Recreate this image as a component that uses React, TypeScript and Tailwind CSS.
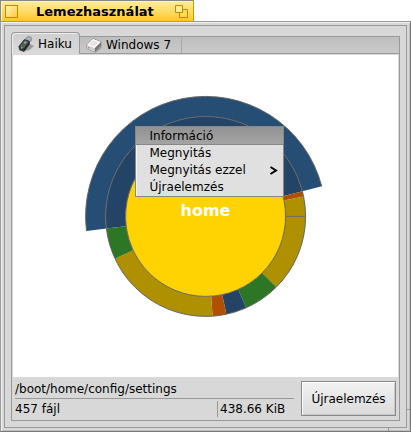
const CENTER = 120;

type Segment = { from: number; to: number; inner: number; outer: number; color: string };

// Angles run clockwise in degrees, starting at three o'clock.
const segments: Segment[] = [
  { from: 173, to: 345.5, inner: 100, outer: 120, color: '#264d73' },
  { from: 173, to: 345.5, inner: 80, outer: 100, color: '#234466' },
  { from: 345.5, to: 348.5, inner: 80, outer: 100, color: '#b05000' },
  { from: 348.5, to: 360, inner: 80, outer: 100, color: '#af9000' },
  { from: 0, to: 45, inner: 80, outer: 100, color: '#af9000' },
  { from: 45, to: 66, inner: 80, outer: 100, color: '#2c7625' },
  { from: 66, to: 78, inner: 80, outer: 100, color: '#234466' },
  { from: 78, to: 86, inner: 80, outer: 100, color: '#b05000' },
  { from: 86, to: 155, inner: 80, outer: 100, color: '#af9000' },
  { from: 155, to: 173, inner: 80, outer: 100, color: '#2c7625' },
];

function point(radius: number, angle: number) {
  const a = (angle * Math.PI) / 180;
  return `${CENTER + radius * Math.cos(a)} ${CENTER + radius * Math.sin(a)}`;
}

function ringPath({ from, to, inner, outer }: Segment) {
  return `M${point(outer, from)}A${outer} ${outer} 0 0 1 ${point(outer, to)}L${point(inner, to)}A${inner} ${inner} 0 0 0 ${point(inner, from)}Z`;
}

function arcPath(radius: number, from: number, to: number) {
  return `M${point(radius, from)}A${radius} ${radius} 0 0 1 ${point(radius, to)}`;
}

function UsageChart() {
  return (
    <svg viewBox="-0.6 -1.4 242 242" className="block size-[242px]" role="img" aria-label="home">
      {segments.map((s, i) => (
        <path key={i} d={ringPath(s)} fill={s.color} />
      ))}
      <circle cx={CENTER} cy={CENTER} r="80" fill="#ffd202" />
      <g fill="none" stroke="#666" strokeWidth="1">
        <circle cx={CENTER} cy={CENTER} r="80" />
        <circle cx={CENTER} cy={CENTER} r="100" />
        <path d={arcPath(120, 173, 345.5)} />
        <path d="M200 120h20" />
      </g>
    </svg>
  );
}

function UsbIcon() {
  return (
    <svg viewBox="0 0 16 16" className="size-4 shrink-0" aria-hidden="true">
      <path d="M5 15.5l6.5-1.5 4.5-4-4-2z" fill="#8c8c8c" opacity=".8" />
      <path d="M7.5 3.2L9.5.5l3.6.7.4 3.3-2.2 1.8z" fill="#a5b5ba" stroke="#69797d" strokeWidth=".7" />
      <path d="M.8 10.5l5.5-7 5.2 1.7v3L6 15.5l-4.4-1.6z" fill="#333" stroke="#222" strokeWidth=".6" />
      <path d="M1.8 10.5l4.9-6.2 4 1.5-4.6 6.5z" fill="#565c59" />
      <path d="M6.2 12.5l4.6-6.3-.2 2.4L6 15z" fill="#222" />
      <path d="M5.5 7l1.5-2 2 .9-1.6 2z" fill="#999" />
      <circle cx="3.7" cy="11.7" r="1" fill="#42dd55" />
    </svg>
  );
}

function DiskIcon() {
  return (
    <svg viewBox="0 0 16 16" className="size-4 shrink-0" aria-hidden="true">
      <path d="M8 15l7.5-6v2L10 15.5z" fill="#888" opacity=".7" />
      <path d="M.7 8.2L7 1.5l8 3.3v3.7L8.7 15 1 11.5z" fill="#ddd" stroke="#777" strokeWidth=".7" />
      <path d="M1 8L7 2l7.7 3-6.2 6z" fill="#fff" />
      <path d="M3 7.5l4.2-4.3 5.5 2.2-4.5 4z" fill="#e3e3e3" />
      <path d="M8.7 11.2L15 5v3.5L8.7 15z" fill="#747474" />
      <path d="M1 8.3l7.7 3v3.4L1 11.4z" fill="#d0d0d0" />
      <path d="M2.2 10.2h1.3v1H2.2z" fill="#e05038" />
    </svg>
  );
}

const menuItems = ['Információ', 'Megnyitás', 'Megnyitás ezzel', 'Újraelemzés'];

function ContextMenu() {
  return (
    <div
      role="menu"
      className="absolute top-[71px] left-1/2 -ml-[71px] w-[149px] border border-[#888] bg-[#e0e0e0] pb-px shadow-[inset_1px_1px_0_#f4f4f4]"
    >
      {menuItems.map((item, i) => (
        <button
          key={item}
          role="menuitem"
          className={`flex w-full items-center justify-between pr-[5px] pl-[14px] text-left ${
            i === 0
              ? 'h-[18px] border-b border-[#888] bg-linear-to-b from-[#929292] to-[#a4a4a4] pt-px leading-4'
              : 'h-[17px] leading-[17px] last:h-[16px]'
          }`}
        >
          {item}
          {i === 2 && (
            <svg viewBox="0 0 9 9" className="size-[9px]" aria-hidden="true">
              <path d="M1.5 1l5.5 3.5L1.5 8" fill="none" stroke="#000" strokeWidth="2" />
            </svg>
          )}
        </button>
      ))}
    </div>
  );
}

function TitleTab() {
  return (
    <header className="flex h-[21px] w-[194px] items-center border border-b-0 border-[#888] border-r-[#c89b00] bg-linear-to-b from-[#ffec9c] to-[#ffca08] px-1 pt-px shadow-[inset_1px_1px_0_#fff3bd]">
      <button
        aria-label="Bezárás"
        className="size-[13px] border border-[#bd8c00] bg-linear-to-br from-[#fff3b8] to-[#ffcb08]"
      />
      <h1 className="flex-1 pl-[18px] text-[13px] leading-5 font-bold">Lemezhasználat</h1>
      <button aria-label="Nagyítás">
        <svg viewBox="0 0 14 14" className="block size-[14px]" aria-hidden="true">
          <g stroke="#bd8c00" fill="#ffdc55">
            <path d="M4.5 4.5h8v8h-8z" />
            <path d="M.5 .5h7v7h-7z" fill="#ffeb91" />
          </g>
        </svg>
      </button>
    </header>
  );
}

export default function App() {
  return (
    <div className="flex h-screen flex-col bg-white font-['DejaVu_Sans',sans-serif] text-[12px] text-black">
      <TitleTab />
      <main className="relative flex min-h-0 flex-1 flex-col border border-[#999] border-r-[#777] border-b-[#777] bg-[#d8d8d8] p-[3px] shadow-[inset_1px_1px_0_#f0f0f0,inset_-1px_-1px_0_#c0c0c0]">
        <span className="absolute right-0 bottom-[21px] h-px w-1 bg-[#999]" />
        <span className="absolute right-[21px] bottom-0 h-1 w-px bg-[#999]" />
        <div className="flex min-h-0 flex-1 flex-col border border-[#999] px-[6px] pt-[6px] pb-[6px]">
          <div role="tablist" className="flex items-end">
            <button
              role="tab"
              aria-selected="true"
              className="flex h-[22px] w-[69px] items-center gap-1 rounded-t-[4px] border border-b-0 border-[#999] bg-linear-to-b from-[#cfcfcf] to-[#dadada] pl-[6px] shadow-[inset_1px_1px_0_#eee]"
            >
              <UsbIcon />
              Haiku
            </button>
            <div className="flex h-[18px] flex-1 border-y border-r border-[#999] bg-linear-to-b from-[#bebebe] to-[#c9c9c9]">
              <button
                role="tab"
                aria-selected="false"
                className="flex w-[102px] items-center gap-1 border-r border-[#aaa] pl-[6px] whitespace-nowrap"
              >
                <DiskIcon />
                Windows 7
              </button>
            </div>
          </div>
          <section className="flex min-h-0 flex-1 flex-col border border-t-0 border-[#999] px-px pt-px pb-[3px]">
            <div className="relative flex min-h-0 flex-1 items-center justify-center bg-white">
              <div className="relative">
                <UsageChart />
                <span className="absolute inset-x-0 top-[106px] text-center text-[16px] leading-5 font-bold text-white">
                  home
                </span>
              </div>
              <ContextMenu />
            </div>
            <footer className="flex pt-1">
              <div className="mr-[7px] min-w-0 flex-1 pl-[2px]">
                <p className="h-[18px] border-b border-[#999] leading-4">/boot/home/config/settings</p>
                <div className="flex pt-[2px] leading-4">
                  <p className="flex-1">457 fájl</p>
                  <p className="w-[77px] border-l border-[#999] pl-[2px]">438.66 KiB</p>
                </div>
              </div>
              <button className="mr-[2px] h-[35px] w-[95px] border border-[#888] bg-linear-to-b from-[#f2f2f2] to-[#dadada] shadow-[inset_1px_1px_0_#fff,inset_-1px_-1px_0_#c8c8c8]">
                Újraelemzés
              </button>
            </footer>
          </section>
        </div>
      </main>
    </div>
  );
}
